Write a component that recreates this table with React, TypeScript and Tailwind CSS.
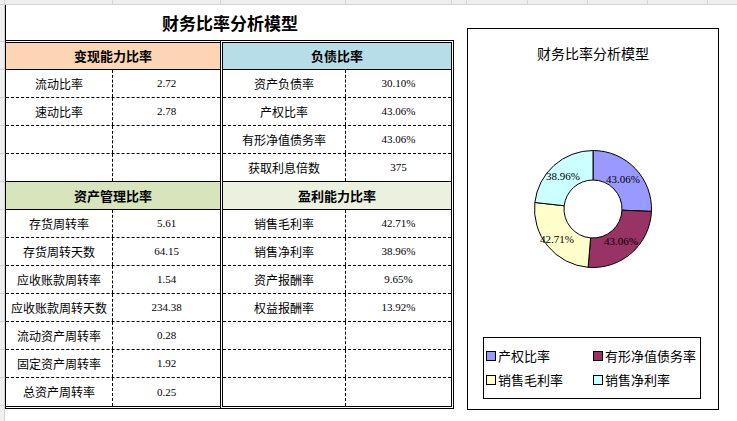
import React from "react";

const CJK = { fontFamily: '"Noto Sans CJK SC", "Noto Sans", sans-serif' };
const NUM = { fontFamily: '"Liberation Serif", "Noto Sans CJK SC", serif' };

type Row = [string, string];

const liquidity: Row[] = [
  ["流动比率", "2.72"],
  ["速动比率", "2.78"],
  ["", ""],
  ["", ""],
];
const assetMgmt: Row[] = [
  ["存货周转率", "5.61"],
  ["存货周转天数", "64.15"],
  ["应收账款周转率", "1.54"],
  ["应收账款周转天数", "234.38"],
  ["流动资产周转率", "0.28"],
  ["固定资产周转率", "1.92"],
  ["总资产周转率", "0.25"],
];
const debt: Row[] = [
  ["资产负债率", "30.10%"],
  ["产权比率", "43.06%"],
  ["有形净值债务率", "43.06%"],
  ["获取利息倍数", "375"],
];
const profit: Row[] = [
  ["销售毛利率", "42.71%"],
  ["销售净利率", "38.96%"],
  ["资产报酬率", "9.65%"],
  ["权益报酬率", "13.92%"],
  ["", ""],
  ["", ""],
  ["", ""],
];

function DataRow({
  row,
  labelW,
  border,
}: {
  row: Row;
  labelW: string;
  border: "dashed" | "solid" | "none";
}) {
  const b =
    border === "dashed"
      ? "border-b border-dashed border-black"
      : border === "solid"
      ? "border-b border-solid border-black"
      : "";
  return (
    <div className={`flex h-[28px] ${b}`}>
      <div
        className={`${labelW} shrink-0 h-full flex items-center justify-center border-r border-dashed border-black text-[12px] text-black`}
        style={CJK}
      >
        {row[0]}
      </div>
      <div
        className="flex-1 h-full flex items-center justify-center text-[11px] text-black"
        style={NUM}
      >
        {row[1]}
      </div>
    </div>
  );
}

function Header({ text, bg, h }: { text: string; bg: string; h: string }) {
  return (
    <div
      className={`${h} ${bg} flex items-center justify-center border-b border-black text-[13px] font-bold text-black`}
      style={CJK}
    >
      {text}
    </div>
  );
}

function Table({
  top,
  topBg,
  topRows,
  bottom,
  bottomBg,
  bottomRows,
  labelW,
  cls,
}: {
  top: string;
  topBg: string;
  topRows: Row[];
  bottom: string;
  bottomBg: string;
  bottomRows: Row[];
  labelW: string;
  cls: string;
}) {
  return (
    <div className={`flex flex-col ${cls}`}>
      <Header text={top} bg={topBg} h="h-[27px]" />
      {topRows.map((r, i) => (
        <DataRow
          key={"t" + i}
          row={r}
          labelW={labelW}
          border={i === topRows.length - 1 ? "solid" : "dashed"}
        />
      ))}
      <Header text={bottom} bg={bottomBg} h="h-[28px]" />
      {bottomRows.map((r, i) => (
        <DataRow
          key={"b" + i}
          row={r}
          labelW={labelW}
          border={i === bottomRows.length - 1 ? "none" : "dashed"}
        />
      ))}
    </div>
  );
}

function seg(cx: number, cy: number, r0: number, r1: number, a0: number, a1: number) {
  const p = (r: number, a: number) => {
    const rad = (a * Math.PI) / 180;
    return [cx + r * Math.sin(rad), cy - r * Math.cos(rad)];
  };
  const large = a1 - a0 > 180 ? 1 : 0;
  const [x0, y0] = p(r1, a0);
  const [x1, y1] = p(r1, a1);
  const [x2, y2] = p(r0, a1);
  const [x3, y3] = p(r0, a0);
  return `M${x0} ${y0} A${r1} ${r1} 0 ${large} 1 ${x1} ${y1} L${x2} ${y2} A${r0} ${r0} 0 ${large} 0 ${x3} ${y3} Z`;
}

const slices = [
  { name: "产权比率", v: 43.06, color: "#9999ff", lx: 30, ly: -30 },
  { name: "有形净值债务率", v: 43.06, color: "#993366", lx: 28, ly: 32 },
  { name: "销售毛利率", v: 42.71, color: "#ffffcc", lx: -36, ly: 30 },
  { name: "销售净利率", v: 38.96, color: "#ccffff", lx: -30, ly: -33 },
];

function Donut() {
  const cx = 125;
  const cy = 75;
  const total = slices.reduce((s, x) => s + x.v, 0);
  let acc = 0;
  return (
    <svg width="250" height="150" viewBox="0 0 250 150">
      {slices.map((s) => {
        const a0 = (acc / total) * 360;
        acc += s.v;
        const a1 = (acc / total) * 360;
        return (
          <path
            key={s.name}
            d={seg(cx, cy, 29, 58.5, a0, a1)}
            fill={s.color}
            stroke="#000"
            strokeWidth="1"
          />
        );
      })}
      {slices.map((s) => (
        <text
          key={"l" + s.name}
          x={cx + s.lx}
          y={cy + s.ly}
          textAnchor="middle"
          dominantBaseline="central"
          fontSize="11"
          fill="#000"
          style={NUM}
        >
          {s.v.toFixed(2)}%
        </text>
      ))}
    </svg>
  );
}

function LegendItem({ color, name }: { color: string; name: string }) {
  return (
    <div className="flex items-center h-[16px]">
      <div className="w-[10px] h-[10px] border border-black shrink-0" style={{ backgroundColor: color }} />
      <span className="ml-[2px] text-[13px] leading-[16px] text-black whitespace-nowrap" style={CJK}>
        {name}
      </span>
    </div>
  );
}

export default function App() {
  const topCells = ["w-[5px]", "w-[108px]", "w-[108px]", "w-[125px]", "w-[106px]", "w-[15px]", "w-[61px]", "w-[60px]", "w-[60px]", "w-[60px]"];
  const sideCells = Array.from({ length: 14 });
  return (
    <div className="w-[737px] h-[421px] bg-white overflow-hidden relative">
      {/* column header strip */}
      <div className="flex h-[5px] bg-[#efefef] border-b border-[#d4d4d4]">
        {topCells.map((w, i) => (
          <div key={i} className={`${w} shrink-0 h-full border-r border-[#d4d4d4]`} />
        ))}
      </div>
      <div className="flex">
        {/* row header strip */}
        <div className="w-[5px] shrink-0 flex flex-col bg-[#efefef] border-r border-[#d4d4d4]">
          <div className="h-[37px] border-b border-[#d4d4d4]" />
          {sideCells.map((_, i) => (
            <div key={i} className="h-[28px] border-b border-[#d4d4d4]" />
          ))}
        </div>
        {/* main block */}
        <div className="w-[449px] shrink-0 flex flex-col">
          <div
            className="h-[35px] border-l border-black flex items-center justify-center text-[17px] font-bold text-black"
            style={CJK}
          >
            财务比率分析模型
          </div>
          <div className="flex border-l border-black">
            <Table
              top="变现能力比率"
              topBg="bg-[#fcd5b4]"
              topRows={liquidity}
              bottom="资产管理比率"
              bottomBg="bg-[#d8e4bc]"
              bottomRows={assetMgmt}
              labelW="w-[107px]"
              cls="w-[214px] border-t-[3px] border-b-[3px] border-double border-black"
            />
            <Table
              top="负债比率"
              topBg="bg-[#b7dee8]"
              topRows={debt}
              bottom="盈利能力比率"
              bottomBg="bg-[#ebf1de]"
              bottomRows={profit}
              labelW="w-[123px]"
              cls="w-[234px] border-[3px] border-double border-black"
            />
          </div>
        </div>
        {/* chart */}
        <div className="ml-[13px] mt-[23px] w-[252px] h-[382px] shrink-0 border border-black flex flex-col">
          <div className="pt-[14px] text-center text-[14px] leading-[20px] text-black" style={CJK}>
            财务比率分析模型
          </div>
          <div className="mt-[71px]">
            <Donut />
          </div>
          <div className="mt-[53px] ml-[15px] w-[218px] h-[62px] border border-black pt-[10px] pl-[2px] grid grid-cols-[107px_1fr] gap-y-[8px] content-start">
            {slices.map((s) => (
              <LegendItem key={s.name} color={s.color} name={s.name} />
            ))}
          </div>
        </div>
      </div>
    </div>
  );
}
